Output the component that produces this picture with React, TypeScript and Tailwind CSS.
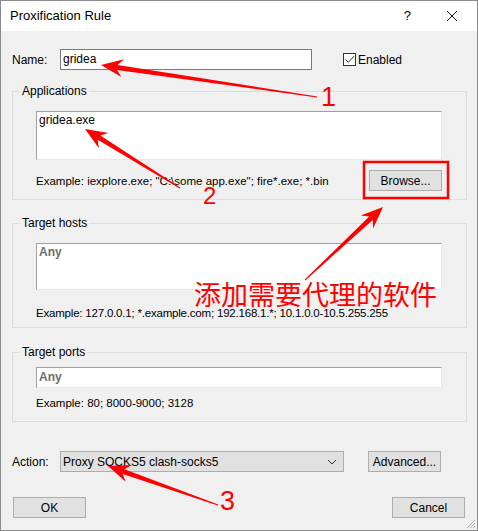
import React from 'react';

const font = { fontFamily: '"Liberation Sans", "Noto Sans", sans-serif' };

type Pt = [number, number];

function arrowPoints(tail: Pt, tip: Pt, head = 22, half = 9, shaft = 5) {
  const dx = tip[0] - tail[0];
  const dy = tip[1] - tail[1];
  const len = Math.hypot(dx, dy);
  const ux = dx / len;
  const uy = dy / len;
  const nx = -uy;
  const ny = ux;
  const b: Pt = [tip[0] - ux * head, tip[1] - uy * head];
  const j: Pt = [tip[0] - ux * head * 0.75, tip[1] - uy * head * 0.75];
  const pts: Pt[] = [
    [tail[0] + nx * 0.5, tail[1] + ny * 0.5],
    [j[0] + (nx * shaft) / 2, j[1] + (ny * shaft) / 2],
    [b[0] + nx * half, b[1] + ny * half],
    tip,
    [b[0] - nx * half, b[1] - ny * half],
    [j[0] - (nx * shaft) / 2, j[1] - (ny * shaft) / 2],
    [tail[0] - nx * 0.5, tail[1] - ny * 0.5],
  ];
  return pts.map(p => `${p[0].toFixed(1)},${p[1].toFixed(1)}`).join(' ');
}

function Field({ children, h }: { children?: React.ReactNode; h: string }) {
  return (
    <div className={`${h} w-[406px] bg-white border-t border-l border-[#a0a0a0] border-r-[#e8e8e8] border-b-[#e8e8e8] border-r border-b px-[2px] text-[12px] leading-[16px]`}>
      {children}
    </div>
  );
}

function Button({ label, className = '' }: { label: string; className?: string }) {
  return (
    <div className={`h-[21px] w-[73px] bg-[#e1e1e1] border border-[#adadad] flex items-center justify-center text-[12px] text-black ${className}`}>
      {label}
    </div>
  );
}

function Group({ title, className, children }: { title: string; className: string; children: React.ReactNode }) {
  return (
    <fieldset className={`w-[455px] border border-[#dcdcdc] p-0 ${className}`}>
      <legend className="ml-[7px] px-[2px] leading-[16px] text-[12px]">{title}</legend>
      <div className="pl-[23px]">{children}</div>
    </fieldset>
  );
}

export default function App() {
  return (
    <div className="relative w-[478px] h-[531px] bg-[#f0f0f0] border border-[#8c8c8c] flex flex-col text-black overflow-hidden" style={font}>
      {/* title bar */}
      <div className="h-[30px] bg-white flex items-center shrink-0">
        <span className="ml-[9px] text-[13px]">Proxification Rule</span>
        <span className="ml-auto mr-[35px] text-[13px]">?</span>
        <svg width="12" height="12" viewBox="0 0 12 12" className="mr-[19px]">
          <path d="M1 1 L11 11 M11 1 L1 11" stroke="#111" strokeWidth="1" />
        </svg>
      </div>

      <div className="flex flex-col pl-[11px] text-[12px]">
        {/* name row */}
        <div className="flex items-center mt-[18px] h-[21px]">
          <span className="w-[48px]">Name:</span>
          <div className="w-[252px] h-[21px] border border-[#7a7a7a] bg-white px-[2px] leading-[19px]">gridea</div>
          <div className="ml-[31px] w-[13px] h-[13px] border border-[#333] bg-white flex items-center justify-center">
            <svg width="11" height="11" viewBox="0 0 11 11">
              <path d="M1.5 5.5 L4.3 8.3 L9.8 2.3" stroke="#333" strokeWidth="1" fill="none" />
            </svg>
          </div>
          <span className="ml-[2px]">Enabled</span>
        </div>

        {/* applications */}
        <Group title="Applications" className="mt-[13px] pb-[8px]">
          <div className="mt-[12px]">
            <Field h="h-[49px]">gridea.exe</Field>
          </div>
          <div className="flex items-center justify-between w-[406px] mt-[10px]">
            <span className="text-[11.5px] pt-[2px]">Example: iexplore.exe; "C:\some app.exe"; fire*.exe; *.bin</span>
            <Button label="Browse..." />
          </div>
        </Group>

        {/* target hosts */}
        <Group title="Target hosts" className="mt-[15px] pb-[4px]">
          <div className="mt-[12px]">
            <Field h="h-[47px]">
              <span className="font-bold text-[#6d6d6d]">Any</span>
            </Field>
          </div>
          <div className="mt-[15px] h-[18px] flex items-center text-[11.5px] tracking-[-0.2px]">
            Example: 127.0.0.1; *.example.com; 192.168.1.*; 10.1.0.0-10.5.255.255
          </div>
        </Group>

        {/* target ports */}
        <Group title="Target ports" className="mt-[16px] pb-[8px]">
          <div className="mt-[7px]">
            <Field h="h-[21px]">
              <span className="font-bold text-[#6d6d6d] leading-[19px]">Any</span>
            </Field>
          </div>
          <div className="mt-[7px] h-[18px] flex items-center text-[11.5px]">Example: 80; 8000-9000; 3128</div>
        </Group>

        {/* action row */}
        <div className="flex items-center mt-[29px] h-[21px]">
          <span className="w-[48px]">Action:</span>
          <div className="w-[284px] h-[21px] bg-[#e1e1e1] border border-[#adadad] flex items-center px-[2px]">
            <span>Proxy SOCKS5 clash-socks5</span>
            <svg width="10" height="6" viewBox="0 0 10 6" className="ml-auto mr-[4px]">
              <path d="M1 1 L5 5 L9 1" stroke="#333" strokeWidth="1" fill="none" />
            </svg>
          </div>
          <Button label="Advanced..." className="ml-[24px]" />
        </div>

        {/* ok / cancel */}
        <div className="flex items-center mt-[25px] w-[453px] justify-between">
          <Button label="OK" className="ml-[1px]" />
          <Button label="Cancel" />
        </div>
      </div>

      {/* resize grip */}
      <svg width="10" height="10" viewBox="0 0 10 10" className="absolute right-[1px] bottom-[1px]">
        <path d="M9 1 L1 9 M9 4 L4 9 M9 7 L7 9" stroke="#b0b0b0" strokeWidth="1" />
      </svg>

      {/* red annotations */}
      <div className="absolute left-[-1px] top-[-1px] w-[478px] h-[531px] pointer-events-none">
        <svg width="478" height="531" className="absolute inset-0">
          <polygon points={arrowPoints([317, 97], [101, 65], 22, 9, 5)} fill="#ff0000" />
          <polygon points={arrowPoints([180, 188], [85, 129], 22, 9, 5)} fill="#ff0000" />
          <polygon points={arrowPoints([305, 280], [383, 207], 22, 9, 5)} fill="#ff0000" />
          <polygon points={arrowPoints([218, 505], [108, 466], 22, 9, 5)} fill="#ff0000" />
          <rect x="364" y="162" width="84" height="36" fill="none" stroke="#ff0000" strokeWidth="2.5" />
        </svg>
        <span className="absolute left-[321px] top-[82px] text-[#ff0000] text-[27px] leading-[30px]" style={{ fontFamily: '"Liberation Sans", sans-serif' }}>1</span>
        <span className="absolute left-[203px] top-[183px] text-[#ff0000] text-[24px] leading-[26px]" style={{ fontFamily: '"Liberation Sans", sans-serif' }}>2</span>
        <span className="absolute left-[220px] top-[486px] text-[#ff0000] text-[27px] leading-[30px]" style={{ fontFamily: '"Liberation Sans", sans-serif' }}>3</span>
        <span className="absolute left-[194px] top-[278px] text-[#ff0000] text-[27px] leading-[32px]" style={{ fontFamily: '"Noto Sans CJK SC", sans-serif' }}>添加需要代理的软件</span>
      </div>
    </div>
  );
}
